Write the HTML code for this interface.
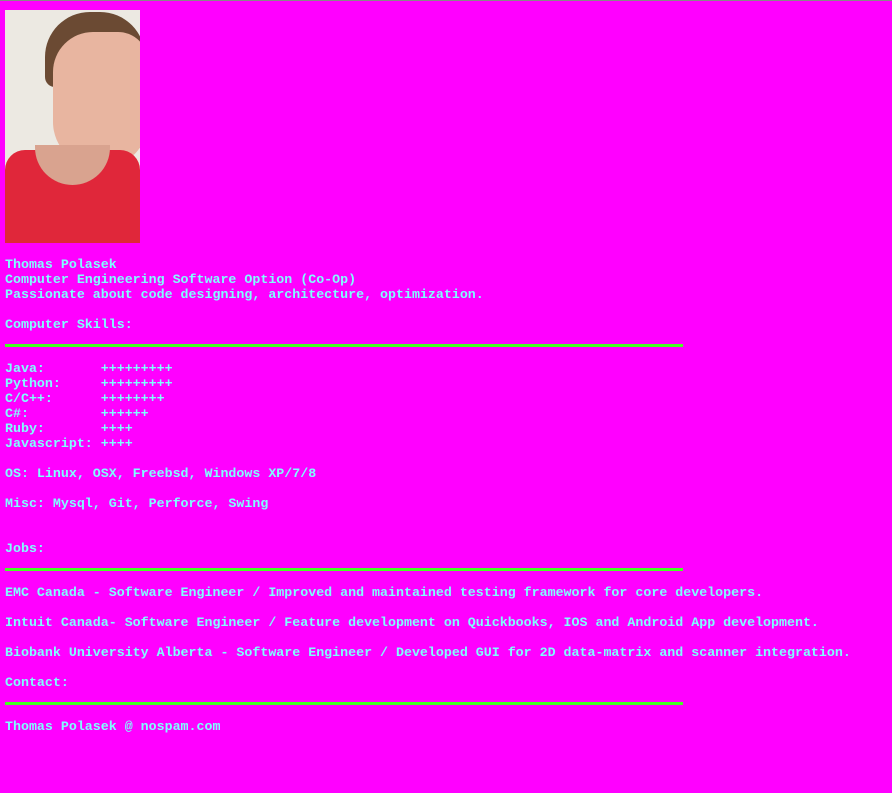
<!DOCTYPE html>
<html><head><meta charset="utf-8"><style>
html,body{margin:0;padding:0;}
body{width:892px;height:793px;background:#ff00ff;position:relative;overflow:hidden;
font-family:"Liberation Mono",monospace;font-weight:bold;font-size:13.3px;color:#7fffff;}
.top{position:absolute;left:0;top:0;width:892px;height:1px;background:#888;}
.t{position:absolute;left:5px;white-space:pre;line-height:15px;height:15px;}
.hr{position:absolute;left:5px;width:678px;height:3px;background:#44ff22;}
.photo{position:absolute;left:5px;top:10px;width:135px;height:233px;background:#ece9e2;overflow:hidden;}
</style></head><body>
<div class="top"></div>
<div class="photo">
 <div style="position:absolute;left:40px;top:2px;width:100px;height:75px;background:#6b4a33;border-radius:45px 45px 10px 10px;"></div>
 <div style="position:absolute;left:48px;top:22px;width:95px;height:135px;background:#e8b5a0;border-radius:40px 30px 45px 45px;"></div>
 <div style="position:absolute;left:0;top:140px;width:135px;height:93px;background:#e0273a;border-radius:20px 20px 0 0;"></div>
 <div style="position:absolute;left:30px;top:135px;width:75px;height:40px;background:#d9a38f;border-radius:0 0 40px 40px;"></div>
</div>
<div class="t" style="top:257px">Thomas Polasek</div>
<div class="t" style="top:272px">Computer Engineering Software Option (Co-Op)</div>
<div class="t" style="top:287px">Passionate about code designing, architecture, optimization.</div>
<div class="t" style="top:317px">Computer Skills:</div>
<div class="hr" style="top:344px"></div>
<div class="t" style="top:361px">Java:       +++++++++</div>
<div class="t" style="top:376px">Python:     +++++++++</div>
<div class="t" style="top:391px">C/C++:      ++++++++</div>
<div class="t" style="top:406px">C#:         ++++++</div>
<div class="t" style="top:421px">Ruby:       ++++</div>
<div class="t" style="top:436px">Javascript: ++++</div>
<div class="t" style="top:466px">OS: Linux, OSX, Freebsd, Windows XP/7/8</div>
<div class="t" style="top:496px">Misc: Mysql, Git, Perforce, Swing</div>
<div class="t" style="top:541px">Jobs:</div>
<div class="hr" style="top:568px"></div>
<div class="t" style="top:585px">EMC Canada - Software Engineer / Improved and maintained testing framework for core developers.</div>
<div class="t" style="top:615px">Intuit Canada- Software Engineer / Feature development on Quickbooks, IOS and Android App development.</div>
<div class="t" style="top:645px">Biobank University Alberta - Software Engineer / Developed GUI for 2D data-matrix and scanner integration.</div>
<div class="t" style="top:675px">Contact:</div>
<div class="hr" style="top:702px"></div>
<div class="t" style="top:719px">Thomas Polasek @ nospam.com</div>
</body></html>
